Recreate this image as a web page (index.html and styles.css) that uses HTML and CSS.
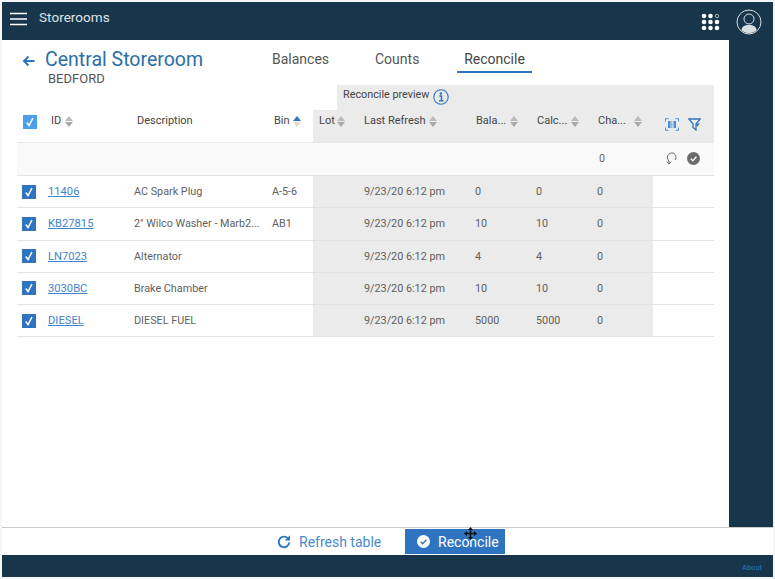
FILE: index.html
```html
<!DOCTYPE html>
<html lang="en">
<head>
<meta charset="utf-8">
<title>Storerooms</title>
<link rel="stylesheet" href="styles.css">
</head>
<body>
<div class="app">
  <header class="topbar">
    <svg class="menu" width="18" height="14" viewBox="0 0 18 14"><path d="M0 1.500h17M0 7h17M0 12.500h17" stroke="#fff" stroke-width="1.600" fill="none"/></svg>
    <span class="app-name">Storerooms</span>
    <svg class="grid-ico" width="20" height="18" viewBox="0 0 20 18">
      <g fill="#fff"><circle cx="3" cy="3" r="2.300"/><circle cx="9.500" cy="3" r="2.300"/><circle cx="3" cy="9" r="2.300"/><circle cx="9.500" cy="9" r="2.300"/><circle cx="16" cy="9" r="2.300"/><circle cx="3" cy="15" r="2.300"/><circle cx="9.500" cy="15" r="2.300"/><circle cx="16" cy="15" r="2.300"/></g>
      <circle cx="16" cy="3" r="1.700" fill="none" stroke="#c8d0d6" stroke-width=".8"/>
    </svg>
    <svg class="avatar" width="26" height="26" viewBox="0 0 26 26">
      <circle cx="13" cy="13" r="12" fill="none" stroke="#d8dde0" stroke-width="1"/>
      <circle cx="13" cy="10" r="5" fill="none" stroke="#d8dde0" stroke-width="1"/>
      <path d="M5.500 21.500c0-4 3-5.500 7.500-5.500s7.500 1.500 7.500 5.500a12 12 0 0 1-15 0z" fill="#d8dde0"/>
    </svg>
  </header>
  <div class="middle">
    <main class="content">
      <div class="head">
        <svg class="back" width="13" height="12" viewBox="0 0 13 12"><path d="M12.500 6H2M6.500 1.500 2 6l4.500 4.500" stroke="#2f74c0" stroke-width="2" fill="none"/></svg>
        <div class="title-block">
          <h1>Central Storeroom</h1>
          <div class="site">BEDFORD</div>
        </div>
        <nav class="tabs">
          <a class="tab tab-balances">Balances</a>
          <a class="tab tab-counts">Counts</a>
          <a class="tab active">Reconcile</a>
        </nav>
      </div>
      <div class="preview">
        <span>Reconcile preview</span>
        <svg width="16" height="16" viewBox="0 0 16 16"><circle cx="8" cy="8" r="7.200" fill="none" stroke="#2f74c0" stroke-width="1.100"/><path d="M6.300 7h2.200v4.500M6 11.700h4.500" stroke="#2f74c0" stroke-width="1.500" fill="none"/><circle cx="7.900" cy="4.500" r="1.200" fill="#2f74c0"/></svg>
      </div>
      <table class="grid">
        <colgroup>
          <col class="c-check"><col class="c-id"><col class="c-desc"><col class="c-bin"><col class="c-lot"><col class="c-refresh"><col class="c-num"><col class="c-num"><col class="c-num"><col class="c-act">
        </colgroup>
        <thead>
          <tr class="hrow">
            <th><span class="box light"><svg width="14" height="14" viewBox="0 0 14 14"><path d="M3.800 7.500 6 10.500 10 3" stroke="#fff" stroke-width="1.500" fill="none"/></svg></span></th>
            <th class="id-h">ID <span class="sort"><i class="up"></i><i class="dn"></i></span></th>
            <th class="desc-h">Description</th>
            <th>Bin <span class="sort"><i class="up on"></i><i class="dn faint"></i></span></th>
            <th class="g">Lot <span class="sort sort-near"><i class="up"></i><i class="dn"></i></span></th>
            <th class="g">Last Refresh <span class="sort"><i class="up"></i><i class="dn"></i></span></th>
            <th class="g">Bala... <span class="sort"><i class="up"></i><i class="dn"></i></span></th>
            <th class="g">Calc... <span class="sort"><i class="up"></i><i class="dn"></i></span></th>
            <th class="g">Cha... <span class="sort sort-far"><i class="up"></i><i class="dn"></i></span></th>
            <th class="g actions">
              <svg width="14" height="13" viewBox="0 0 14 13"><path d="M.5 3.500V.7h3M10.500.7h3v2.800M.5 9.500v2.800h3M10.500 12.300h3V9.500" stroke="#4a8fd6" fill="none"/><path d="M3 3h2.500v7H3zM8.500 3H11v7H8.500z" fill="#4a8fd6"/><path d="M6.800 3v7" stroke="#4a8fd6" stroke-width=".8"/></svg>
              <svg width="13" height="13" viewBox="0 0 13 13"><path d="M.8 1h11.400L8 6v6L5 9.500V6z" fill="none" stroke="#2f74c0" stroke-width="1.300"/><path d="M8 6l4-1-3 4z" fill="#2f74c0"/></svg>
            </th>
          </tr>
        </thead>
        <tbody>
          <tr class="frow">
            <td colspan="8"></td>
            <td class="zero">0</td>
            <td class="actions">
              <svg width="13" height="13" viewBox="0 0 13 13"><path d="M4 11.500V9M1.800 9.500 4 12l2.200-2.500M4 9C1 6 2.500 1 6.800 1c4 0 5.200 4.500 3.200 7" stroke="#666" stroke-width="1" fill="none"/></svg>
              <svg width="13" height="13" viewBox="0 0 13 13"><circle cx="6.500" cy="6.500" r="6.500" fill="#6a6a6a"/><path d="M3.800 6.800 5.800 8.800 9.400 4.800" stroke="#fff" stroke-width="1.300" fill="none"/></svg>
            </td>
          </tr>
          <tr>
            <td><span class="box"><svg width="14" height="14" viewBox="0 0 14 14"><path d="M3.800 7.500 6 10.500 10 3" stroke="#fff" stroke-width="1.500" fill="none"/></svg></span></td>
            <td><a class="link">11406</a></td><td>AC Spark Plug</td><td>A-5-6</td>
            <td class="g"></td><td class="g">9/23/20 6:12 pm</td><td class="g">0</td><td class="g">0</td><td class="g">0</td><td></td>
          </tr>
          <tr>
            <td><span class="box"><svg width="14" height="14" viewBox="0 0 14 14"><path d="M3.800 7.500 6 10.500 10 3" stroke="#fff" stroke-width="1.500" fill="none"/></svg></span></td>
            <td><a class="link">KB27815</a></td><td>2" Wilco Washer - Marb2...</td><td>AB1</td>
            <td class="g"></td><td class="g">9/23/20 6:12 pm</td><td class="g">10</td><td class="g">10</td><td class="g">0</td><td></td>
          </tr>
          <tr>
            <td><span class="box"><svg width="14" height="14" viewBox="0 0 14 14"><path d="M3.800 7.500 6 10.500 10 3" stroke="#fff" stroke-width="1.500" fill="none"/></svg></span></td>
            <td><a class="link">LN7023</a></td><td>Alternator</td><td></td>
            <td class="g"></td><td class="g">9/23/20 6:12 pm</td><td class="g">4</td><td class="g">4</td><td class="g">0</td><td></td>
          </tr>
          <tr>
            <td><span class="box"><svg width="14" height="14" viewBox="0 0 14 14"><path d="M3.800 7.500 6 10.500 10 3" stroke="#fff" stroke-width="1.500" fill="none"/></svg></span></td>
            <td><a class="link">3030BC</a></td><td>Brake Chamber</td><td></td>
            <td class="g"></td><td class="g">9/23/20 6:12 pm</td><td class="g">10</td><td class="g">10</td><td class="g">0</td><td></td>
          </tr>
          <tr>
            <td><span class="box"><svg width="14" height="14" viewBox="0 0 14 14"><path d="M3.800 7.500 6 10.500 10 3" stroke="#fff" stroke-width="1.500" fill="none"/></svg></span></td>
            <td><a class="link">DIESEL</a></td><td>DIESEL FUEL</td><td></td>
            <td class="g"></td><td class="g">9/23/20 6:12 pm</td><td class="g">5000</td><td class="g">5000</td><td class="g">0</td><td></td>
          </tr>
        </tbody>
      </table>
    </main>
    <aside class="side"></aside>
  </div>
  <div class="actionbar">
    <button class="refresh">
      <svg width="14" height="14" viewBox="0 0 14 14"><path d="M12.300 7.500A5.300 5.300 0 1 1 10.600 3" stroke="#2f74c0" stroke-width="1.900" fill="none"/><path d="M13 .3v5.200H7.800z" fill="#2f74c0"/></svg>
      <span>Refresh table</span>
    </button>
    <button class="primary">
      <svg width="13" height="13" viewBox="0 0 13 13"><circle cx="6.500" cy="6.500" r="6.500" fill="#fff"/><path d="M3.700 6.800 5.700 8.800 9.400 4.700" stroke="#2f74c0" stroke-width="1.400" fill="none"/></svg>
      <span>Reconcile</span>
    </button>
    <svg class="cursor" width="13" height="13" viewBox="0 0 13 13"><path d="M6.500 0 9 3H7.300v2.700H10V4l3 2.500L10 9V7.300H7.300V10H9l-2.500 3L4 10h1.700V7.300H3V9L0 6.500 3 4v1.700h2.700V3H4z" fill="#111"/></svg>
  </div>
  <footer class="footer"><a class="about">About</a></footer>
</div>
</body>
</html>
```

FILE: styles.css
```css
* { box-sizing: border-box; }
html, body { margin: 0; padding: 0; }
body {
  background: #f5f5f5;
  font-family: Roboto, "Noto Sans", sans-serif;
  color: #555;
  height: 579px;
  overflow: hidden;
  padding: 2px 2px 1px 2px;
}
.app { display: flex; flex-direction: column; height: 575px; position: relative; }

.topbar {
  height: 38px;
  flex: none;
  background: #17364c;
  display: flex;
  align-items: flex-start;
  color: #dfe4e8;
}
.menu { margin: 10px 0 0 8px; }
.app-name { margin: 6px 0 0 11px; font-size: 13.500px; line-height: 18px; letter-spacing: .05px; }
.grid-ico { margin: 11px 0 0 auto; }
.avatar { margin: 7px 11px 0 15px; }

.middle { flex: 1; display: flex; min-height: 0; }
.content { flex: 1; background: #fff; padding: 0 15px; min-width: 0; }
.side { width: 44px; flex: none; background: #17364c; }

.head { height: 45px; display: flex; align-items: flex-start; position: relative; }
.back { margin: 15px 0 0 5px; flex: none; }
.title-block { margin-left: 10px; width: 227px; flex: none; }
h1 { margin: 7px 0 0; font-size: 19.500px; line-height: 25px; font-weight: 400; color: #2c6ea8; }
.site { margin: 0 0 0 3px; font-size: 13px; line-height: 14px; color: #555; }

.tabs { display: flex; align-items: flex-start; font-size: 14px; color: #555; }
.tab { display: block; height: 33px; line-height: 20px; padding-top: 9px; }
.tab-balances { width: 103px; }
.tab-counts { width: 82px; }
.tab.active { padding: 9px 7px 0; width: 75px; border-bottom: 2px solid #2f74c0; color: #444; text-align: center; }

.preview {
  margin-left: 320px;
  height: 25px;
  background: #ebebeb;
  font-size: 10.800px;
  color: #444;
  display: flex;
  align-items: flex-start;
  padding: 3px 0 0 6px;
  gap: 4px;
}
.preview span { line-height: 13px; margin-top: 0; }
.preview svg { margin-top: 1px; }

.grid { width: 697px; table-layout: fixed; border-collapse: collapse; font-size: 10.800px; }
.c-check { width: 27px; }
.c-id { width: 86px; }
.c-desc { width: 138px; }
.c-bin { width: 45px; }
.c-lot { width: 45px; }
.c-refresh { width: 112px; }
.c-num { width: 61px; }
.c-act { width: 61px; }

th {
  height: 32px;
  text-align: left;
  font-weight: 400;
  font-size: 11px;
  color: #444;
  padding: 0 0 10px 6px;
  white-space: nowrap;
  vertical-align: middle;
}
.hrow th:first-child { padding-left: 6px; }
.hrow th:first-child .box { position: relative; top: 1px; }
.id-h { padding-left: 7px; }
.desc-h { padding-left: 7px; }
.g { background: #ebebeb; }
.hrow { border-bottom: 1px solid #e6e6e6; }
.frow { background: #f9f9f9; }
.frow td { height: 33.500px; }
.zero { padding-left: 7px; color: #666; }

td {
  height: 32.250px;
  padding: 0 0 0 4px;
  white-space: nowrap;
  overflow: hidden;
  border-bottom: 1px solid #e3e3e3;
  color: #5f5f5f;
  vertical-align: middle;
}
tbody td:first-child { padding-left: 5px; }
td:nth-child(6) { padding-left: 6px; }
td:nth-child(7), td:nth-child(8), td:nth-child(9) { padding-left: 5px; }

.box {
  display: block;
  width: 14px;
  height: 14px;
  background: #2f74c0;
}
.box.light { background: #4a9ff0; }
.box svg { display: block; }
.link { color: #3f84cc; text-decoration: underline; font-size: 11.200px; }

.sort { display: inline-flex; flex-direction: column; gap: 1px; vertical-align: middle; margin-left: 1px; }
.sort-near { margin-left: -1px; }
.sort-far { margin-left: 5px; }
.sort i { display: block; width: 0; height: 0; border-left: 4px solid transparent; border-right: 4px solid transparent; }
.up { border-bottom: 5px solid #bbb; }
.dn { border-top: 5px solid #aaa; }
.up.on { border-bottom-color: #2f74c0; }
.dn.faint { border-top-color: #ddd; }

th.actions { padding-bottom: 0; }
.actions { padding-left: 12px; }
.actions svg { vertical-align: middle; }
.actions svg + svg { margin-left: 6px; }
th.actions svg { position: relative; top: -2px; }
td.actions svg { position: relative; top: -1px; }

.actionbar {
  height: 28px;
  flex: none;
  background: #fff;
  border-top: 1px solid #ccc;
  display: flex;
  align-items: flex-start;
  position: relative;
  padding-left: 275px;
}
button { border: 0; font: inherit; display: flex; align-items: center; padding: 0; background: none; }
.refresh { color: #4a8ace; font-size: 14px; gap: 8px; width: 128px; height: 25px; margin-top: 1px; }
.primary {
  width: 100px;
  height: 25px;
  margin-top: 1px;
  background: #2f74c0;
  color: #fff;
  font-size: 14px;
  padding-left: 12px;
  gap: 8px;
}
.cursor { position: absolute; left: 462px; top: -1px; }

.footer {
  height: 22px;
  flex: none;
  background: #17364c;
  display: flex;
  justify-content: flex-end;
  align-items: flex-end;
  padding: 0 11px 5px 0;
}
.about { color: #2a78c0; font-size: 7.500px; line-height: 9px; }
```
